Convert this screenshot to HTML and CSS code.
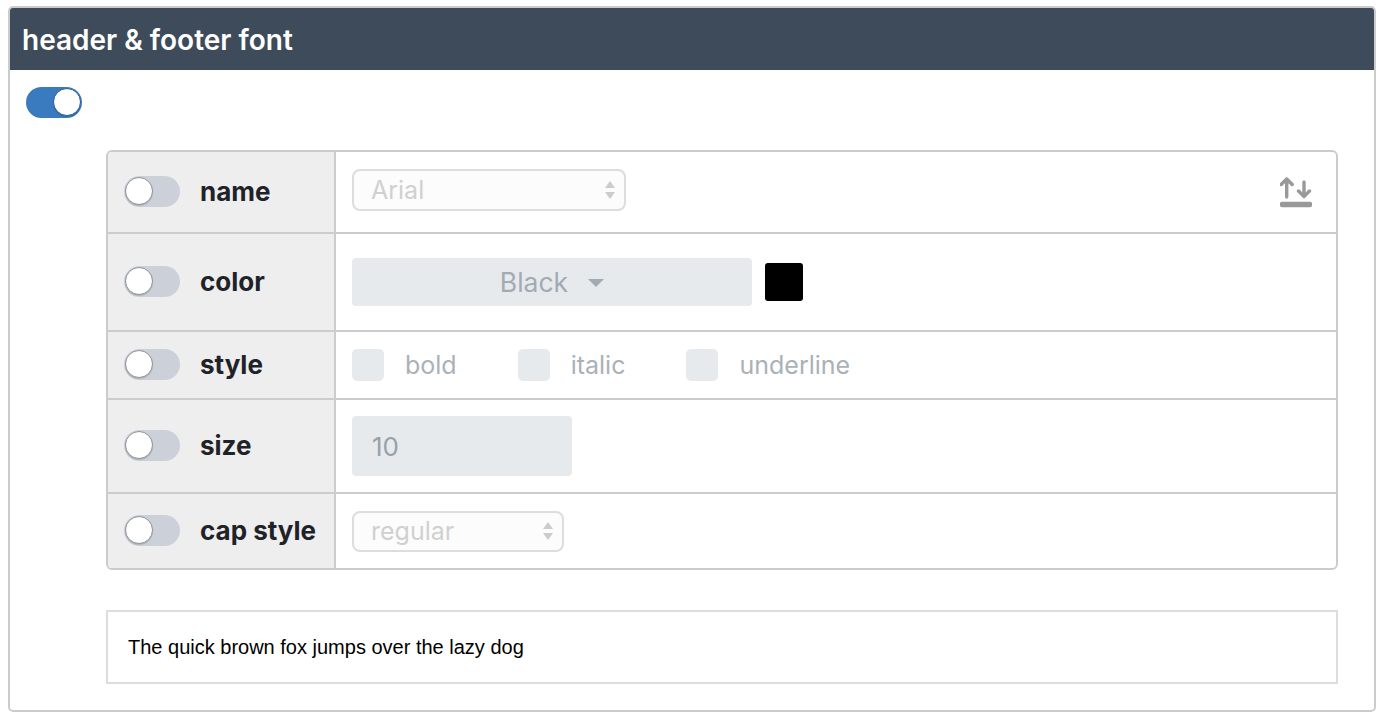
FILE: index.html
```html
<!DOCTYPE html>
<html lang="en">
<head>
<meta charset="utf-8">
<title>header &amp; footer font</title>
<link rel="stylesheet" href="styles.css">
</head>
<body>
<div class="panel">
  <div class="panel-head">header &amp; footer font</div>
  <div class="panel-body">
    <div class="toggle toggle-on"></div>

    <div class="props">
      <div class="prop prop-name">
        <div class="prop-label"><span class="toggle"></span><span class="label-text">name</span></div>
        <div class="prop-value">
          <div class="select select-font">
            <span>Arial</span>
            <svg class="spin" width="12" height="24" viewBox="0 0 12 24"><path d="M6 3 L11 10 L1 10 Z M1 14 L11 14 L6 21 Z"/></svg>
          </div>
          <svg class="sort-icon" width="32" height="34" viewBox="0 0 32 34">
            <path d="M6.7 22 V4 M1.2 9.5 L6.7 4 L12.2 9.5 M24 7 V21.5 M18.5 16 L24 21.5 L29.5 16" />
            <path class="bar" d="M2.5 29.5 H29.5" />
          </svg>
        </div>
      </div>

      <div class="prop prop-color">
        <div class="prop-label"><span class="toggle"></span><span class="label-text">color</span></div>
        <div class="prop-value">
          <div class="color-btn">Black <span class="caret"></span></div>
          <div class="swatch"></div>
        </div>
      </div>

      <div class="prop prop-style">
        <div class="prop-label"><span class="toggle"></span><span class="label-text">style</span></div>
        <div class="prop-value checks">
          <label class="check"><span class="box"></span>bold</label>
          <label class="check"><span class="box"></span>italic</label>
          <label class="check"><span class="box"></span>underline</label>
        </div>
      </div>

      <div class="prop prop-size">
        <div class="prop-label"><span class="toggle"></span><span class="label-text">size</span></div>
        <div class="prop-value">
          <div class="num-input">10</div>
        </div>
      </div>

      <div class="prop prop-cap">
        <div class="prop-label"><span class="toggle"></span><span class="label-text">cap style</span></div>
        <div class="prop-value">
          <div class="select select-cap">
            <span>regular</span>
            <svg class="spin" width="12" height="24" viewBox="0 0 12 24"><path d="M6 3 L11 10 L1 10 Z M1 14 L11 14 L6 21 Z"/></svg>
          </div>
        </div>
      </div>
    </div>

    <div class="preview">The quick brown fox jumps over the lazy dog</div>
  </div>
</div>
</body>
</html>
```

FILE: styles.css
```css
body {
  margin: 0;
  background: #fff;
  font-family: "Inter", "Noto Sans", sans-serif;
  color: #222;
}
.panel {
  margin: 6px 8px 0;
  height: 706px;
  box-sizing: border-box;
  border: 2px solid #ccc;
  border-radius: 5px;
  overflow: hidden;
}
.panel-head {
  height: 62px;
  background: #3e4b5a;
  color: #fff;
  font-size: 28px;
  font-weight: 600;
  line-height: 64px;
  padding-left: 12px;
}
.panel-body {
  padding: 17px 36px 0 16px;
}

/* toggles */
.toggle {
  display: inline-block;
  position: relative;
  width: 56px;
  height: 31px;
  border-radius: 16px;
  background: #ccd1d9;
  flex: none;
}
.toggle::after {
  content: "";
  position: absolute;
  left: 1px;
  top: 1px;
  width: 26px;
  height: 26px;
  border-radius: 50%;
  background: #fff;
  border: 1.5px solid #8d9299;
  box-shadow: 0 1px 1px rgba(0,0,0,0.15);
}
.toggle-on {
  display: block;
  background: #3a7bbf;
}
.toggle-on::after {
  left: auto;
  right: 1px;
  border-color: #2a5d93;
}

/* property table */
.props {
  margin: 32px 0 0 80px;
  border: 2px solid #ccc;
  border-radius: 6px;
  overflow: hidden;
}
.prop {
  display: flex;
  border-top: 2px solid #ccc;
}
.prop:first-child {
  border-top: 0;
}
.prop-name { height: 80px; }
.prop-color { height: 96px; }
.prop-style { height: 66px; }
.prop-size { height: 92px; }
.prop-cap { height: 74px; }

.prop-label {
  width: 228px;
  flex: none;
  background: #eee;
  border-right: 2px solid #ccc;
  display: flex;
  align-items: center;
  padding: 0 0 2px 16px;
  box-sizing: border-box;
}
.label-text {
  margin-left: 20px;
  font-size: 26px;
  font-weight: 700;
  color: #1f2328;
}
.prop-value {
  flex: 1;
  display: flex;
  align-items: center;
  padding: 0 24px 0 16px;
  font-size: 25px;
}

/* selects */
.select {
  height: 42px;
  box-sizing: border-box;
  border: 2px solid #ddd;
  border-radius: 8px;
  background: #fcfcfc;
  color: #d0d0d0;
  display: flex;
  align-items: center;
  justify-content: space-between;
  padding: 0 8px 0 17px;
}
.select-font { width: 274px; margin-bottom: 4px; }
.select-cap { width: 212px; height: 41px; }
.spin {
  fill: #ccc;
}
.sort-icon {
  margin-left: auto;
  fill: none;
  stroke: #999;
  stroke-width: 3.4;
  stroke-linecap: round;
  stroke-linejoin: round;
}
.sort-icon .bar {
  stroke-width: 5.5;
}

/* color */
.color-btn {
  width: 400px;
  height: 48px;
  border-radius: 4px;
  background: #e6eaed;
  color: #a2aab2;
  display: flex;
  align-items: center;
  justify-content: center;
  gap: 20px;
  font-size: 26.5px;
}
.caret {
  width: 0;
  height: 0;
  border-left: 8px solid transparent;
  border-right: 8px solid transparent;
  border-top: 8px solid #a2aab2;
  margin-top: 2px;
}
.swatch {
  width: 38px;
  height: 38px;
  border-radius: 3px;
  background: #000;
  margin-left: 13px;
}

/* checkboxes */
.checks {
  gap: 61px;
}
.check {
  display: flex;
  align-items: center;
  gap: 21px;
  color: #aab1b8;
  font-size: 25px;
}
.box {
  width: 32px;
  height: 32px;
  border-radius: 5px;
  background: #e6eaed;
}

/* size */
.num-input {
  width: 220px;
  height: 60px;
  box-sizing: border-box;
  border-radius: 4px;
  background: #e6eaed;
  color: #98a1aa;
  padding-left: 20px;
  display: flex;
  align-items: center;
  font-size: 26px;
}

/* preview */
.preview {
  margin: 40px 0 0 80px;
  height: 74px;
  box-sizing: border-box;
  border: 2px solid #ddd;
  padding-left: 20px;
  display: flex;
  align-items: center;
  font-family: "Liberation Sans", Arial, sans-serif;
  font-size: 20px;
  color: #000;
}
```
